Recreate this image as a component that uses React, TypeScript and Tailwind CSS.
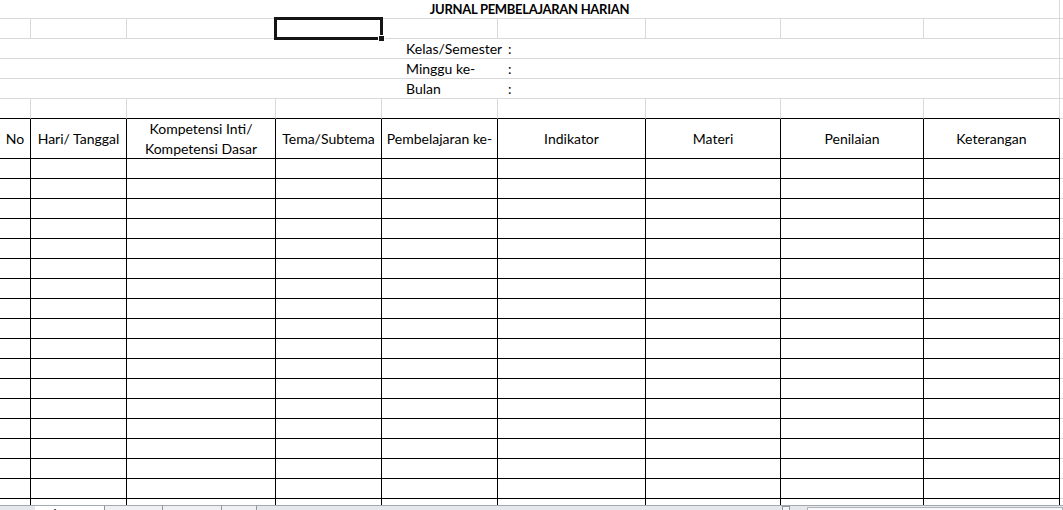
import React from 'react';

// spreadsheet column widths (px), last one is the cut-off next column
const headers = [
  'No',
  'Hari/ Tanggal',
  'Kompetensi Inti/\nKompetensi Dasar',
  'Tema/Subtema',
  'Pembelajaran ke-',
  'Indikator',
  'Materi',
  'Penilaian',
  'Keterangan',
];

const infoRows = ['Kelas/Semester', 'Minggu ke-', 'Bulan'];

const GRID = 'grid grid-cols-[31px_96px_149px_106px_116px_148px_135px_143px_136px_3px]';

const GrayRow = ({ bottom = 'border-[#d9d9d9]' }: { bottom?: string }) => (
  <div className={GRID}>
    {headers.map((_, i) => (
      <div key={i} className={`h-[20px] border-r border-r-[#d9d9d9] border-b ${bottom}`} />
    ))}
    <div className="h-[20px] border-b border-[#d9d9d9]" />
  </div>
);

const BodyRow = () => (
  <div className={GRID}>
    {headers.map((_, i) => (
      <div key={i} className="h-[20px] border-r border-b border-black" />
    ))}
    <div className="h-[20px] border-b border-[#d9d9d9]" />
  </div>
);

const SheetTabs = () => (
  <div className="h-[5px] overflow-hidden bg-[#e4e7eb] border-t border-[#a3a9b0]">
    <div className="flex h-[20px] items-start text-[12px] leading-[18px] text-[#222]">
      <div className="w-[35px] flex gap-[6px] pl-[4px] text-[10px] text-[#555]">
        <span>◄</span>
        <span>►|</span>
      </div>
      <div className="w-[70px] -mt-[1px] bg-white pl-[12px] font-bold border-r border-[#8e959c]">Sheet1</div>
      <div className="w-[58px] pl-[6px] border-r border-[#8e959c] bg-[#eef0f2]">Sheet2</div>
      <div className="w-[59px] pl-[6px] border-r border-[#8e959c] bg-[#eef0f2]">Sheet3</div>
      <div className="w-[35px] pl-[6px] border-r border-[#8e959c] bg-[#eef0f2]">
        <span className="inline-block w-[12px] h-[9px] mt-[3px] border-t-2 border-[#e49b2d]" />
      </div>
      <div className="w-[525px]" />
      <div className="w-[8px] h-[10px] border border-[#8e959c] bg-[#f4f5f7]" />
      <div className="w-[17px] text-center text-[10px] text-[#555]">◄</div>
      <div className="flex-1 h-[14px] mt-[1px] border border-[#aeb4ba] bg-[#f6f7f8]" />
    </div>
  </div>
);

export default function App() {
  return (
    <div className="h-[510px] w-[1063px] overflow-hidden bg-white font-['Lato',sans-serif] text-[14px] text-black">
      <div className="relative h-[505px] overflow-hidden">
        {/* title row */}
        <div className={GRID}>
          <div className="col-span-9 h-[19px] border-r border-b border-[#d9d9d9] text-center text-[13px] font-bold tracking-[-0.3px] leading-[18px]">
            JURNAL PEMBELAJARAN HARIAN
          </div>
          <div className="h-[19px] border-b border-[#d9d9d9]" />
        </div>

        <GrayRow />

        {infoRows.map((label) => (
          <div key={label} className={GRID}>
            <div className="col-span-9 h-[20px] border-r border-b border-[#d9d9d9] flex pl-[406px] leading-[20px]">
              <span className="w-[102px]">{label}</span>
              <span>:</span>
            </div>
            <div className="h-[20px] border-b border-[#d9d9d9]" />
          </div>
        ))}

        <GrayRow bottom="border-b-black" />

        {/* table header */}
        <div className={GRID}>
          {headers.map((h) => (
            <div
              key={h}
              className="h-[40px] border-r border-b border-black flex items-center justify-center text-center leading-[20px] whitespace-pre-line"
            >
              {h}
            </div>
          ))}
          <div className="h-[40px] border-b border-[#d9d9d9]" />
        </div>

        {Array.from({ length: 18 }).map((_, i) => (
          <BodyRow key={i} />
        ))}

        {/* active cell */}
        <div className="absolute left-[274px] top-[17px] w-[109px] h-[23px] border-[3px] border-[#151515]" />
        <div className="absolute left-[378px] top-[35px] w-[7px] h-[7px] bg-[#151515] border border-white" />
      </div>
      <SheetTabs />
    </div>
  );
}
